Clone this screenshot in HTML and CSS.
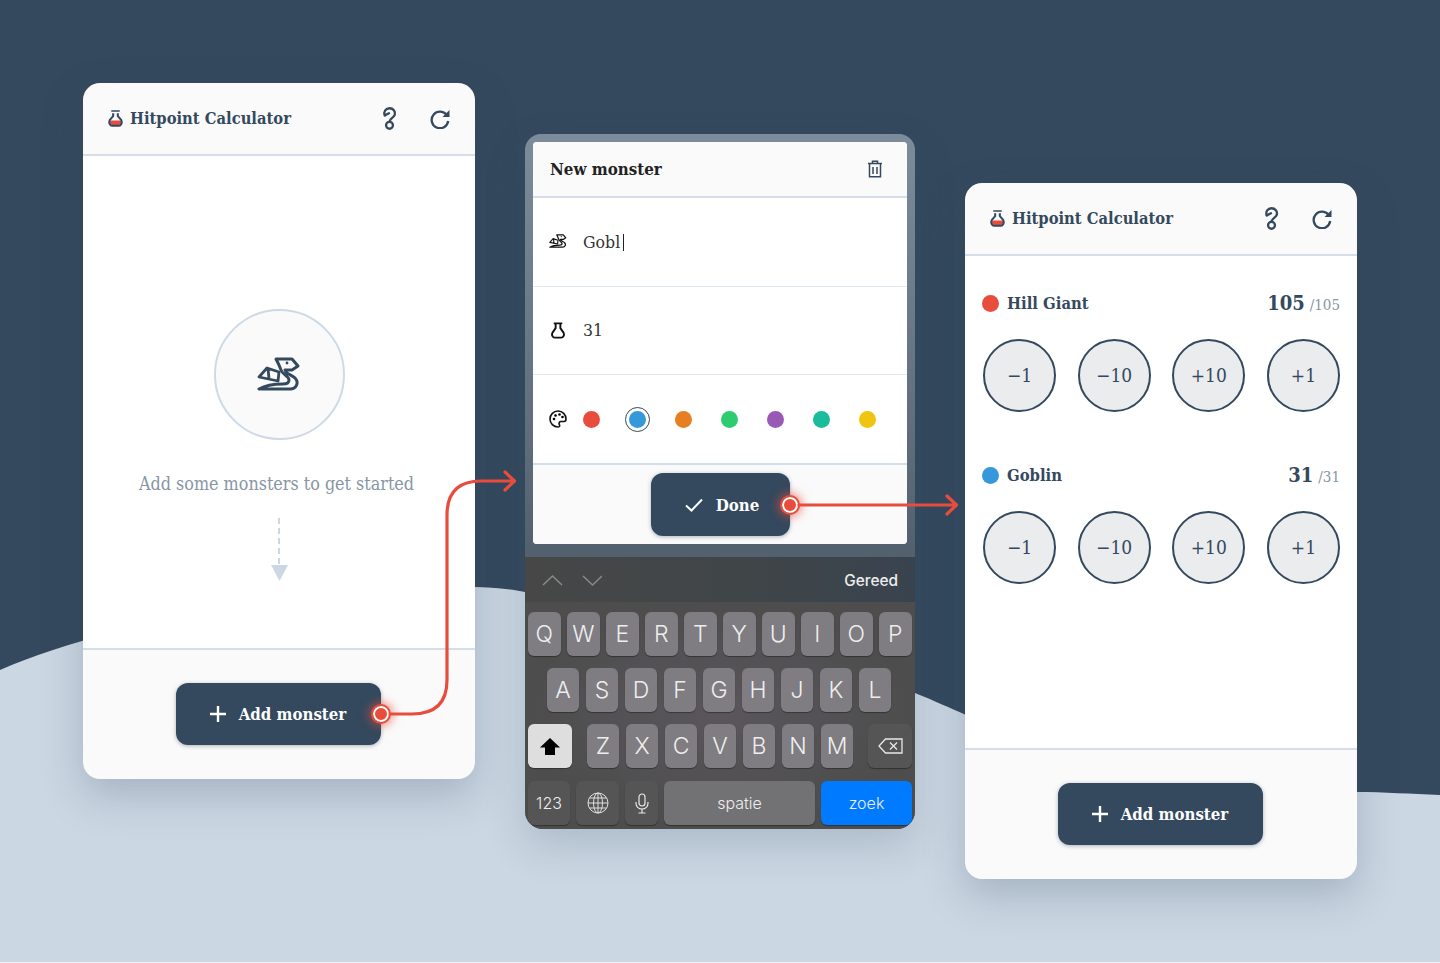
FILE: index.html
```html
<!DOCTYPE html>
<html lang="en">
<head>
  <meta charset="UTF-8" />
  <meta name="viewport" content="width=device-width, initial-scale=1.0"/>
  <title>Hitpoint Calculator</title>
  <link rel="stylesheet" href="styles.css">
</head>
<body>
  <svg width="0" height="0" class="defs">
    <symbol id="i-dragon" viewBox="0 0 44 36">
      <path d="M2 32H33C40 32 42 25 38 21C35 18 29 17 28 13L35 13L41 9L35 2H19L22 8L24 13C25 17 32 19 32 23C32 26 29 27 26 27C17 27 9 28 2 32Z" fill="none" stroke="currentColor" stroke-width="3" stroke-linejoin="round" stroke-linecap="round"/>
      <path d="M2 20L10 11L22 15L21 24ZM11 12L12 21" fill="none" stroke="currentColor" stroke-width="2.800" stroke-linejoin="round"/>
      <circle cx="30" cy="6" r="1.400" fill="currentColor"/>
    </symbol>
    <symbol id="i-flask" viewBox="0 0 16 18">
      <path d="M3.500 1.500H12.500M5.500 2V6.500L2 11.500C1 14 2.500 16.500 4.500 16.500H11.500C13.500 16.500 15 14 14 11.500L10.500 6.500V2" fill="none" stroke="currentColor" stroke-width="2" stroke-linejoin="round"/>
    </symbol>
    <symbol id="i-flask-red" viewBox="0 0 16 18">
      <path d="M3.500 1H12.500" fill="none" stroke="currentColor" stroke-width="1.800"/>
      <path d="M2.500 11H13.500L14 14L12 16H4L2 14Z" fill="#e74c3c"/>
      <path d="M5.500 3.500V6.500L2 10.500C0.500 13.500 2 16.800 4.500 16.800H11.500C14 16.800 15.500 13.500 14 10.500L10.500 6.500V3.500" fill="none" stroke="currentColor" stroke-width="2.200" stroke-linejoin="round"/>
    </symbol>
    <symbol id="i-help" viewBox="0 0 14 22">
      <path d="M2.500 8C1 4.500 3.500 1.200 7 1.200C10.500 1.200 13 4 12 7.500C11.300 10 7.500 10.500 7 14" fill="none" stroke="currentColor" stroke-width="2.200" stroke-linecap="round"/>
      <path d="M2.500 8L6.500 6" fill="none" stroke="currentColor" stroke-width="2.200" stroke-linecap="round"/>
      <circle cx="7" cy="17.500" r="3.300" fill="none" stroke="currentColor" stroke-width="2.200"/>
    </symbol>
    <symbol id="i-refresh" viewBox="0 0 20 20">
      <path d="M17 6.500A8.300 8.300 0 1 0 18.200 12" fill="none" stroke="currentColor" stroke-width="2.300"/>
      <path d="M19.500 1V8H12.500Z" fill="currentColor"/>
    </symbol>
    <symbol id="i-plus" viewBox="0 0 18 18">
      <path d="M9 1V17M1 9H17" fill="none" stroke="currentColor" stroke-width="2.400"/>
    </symbol>
  </svg>

  <div class="canvas">
    <svg class="wave" viewBox="0 0 1440 962" width="1440" height="962">
      <path d="M0 670C110 622 300 590 474 587C490 587 510 589 525 592C660 610 800 650 915 693C935 701 950 708 966 715C1080 770 1220 790 1356 792C1385 792 1410 794 1440 795V962H0Z" fill="#cbd7e3"/>
    </svg>

    <!-- Leeg scherm -->
    <section class="card card-empty">
      <header class="card-head">
        <svg class="head-flask" width="15" height="17"><use href="#i-flask-red"/></svg>
        <h1>Hitpoint Calculator</h1>
        <svg class="head-help" width="15" height="23"><use href="#i-help"/></svg>
        <svg class="head-refresh" width="20" height="20"><use href="#i-refresh"/></svg>
      </header>
      <div class="card-body empty-body">
        <div class="empty-circle">
          <svg width="44" height="36"><use href="#i-dragon"/></svg>
        </div>
        <p class="empty-text">Add some monsters to get started</p>
        <svg class="down-arrow" width="18" height="64" viewBox="0 0 18 64">
          <path d="M9 0V48" stroke="#cbd7e3" stroke-width="2" stroke-dasharray="6 4" fill="none"/>
          <path d="M1 47H18L9.500 63Z" fill="#cbd7e3"/>
        </svg>
      </div>
      <footer class="card-foot">
        <button class="btn add-btn">
          <svg width="18" height="18"><use href="#i-plus"/></svg>
          Add monster
          <span class="pin"></span>
        </button>
      </footer>
    </section>

    <!-- Nieuw monster, met toetsenbord -->
    <section class="phone">
      <div class="sheet">
        <header class="sheet-head">
          <h2>New monster</h2>
          <svg width="16" height="18" viewBox="0 0 16 18" class="trash">
            <path d="M1 3.500H15M5.500 3V1.200H10.500V3M2.500 3.500V16.800H13.500V3.500M6 7V14M10 7V14" fill="none" stroke="currentColor" stroke-width="1.500"/>
          </svg>
        </header>
        <div class="field">
          <svg class="field-icon" width="18" height="15"><use href="#i-dragon"/></svg>
          <span class="field-text">Gobl<span class="caret"></span></span>
        </div>
        <div class="field">
          <svg class="field-icon" width="16" height="17"><use href="#i-flask"/></svg>
          <span class="field-text">31</span>
        </div>
        <div class="field field-colors">
          <svg class="field-icon" width="18" height="18" viewBox="0 0 18 18">
            <path d="M9 1C4.500 1 1 4.500 1 9C1 13.500 4.500 17 9 17C11 17 11 15.500 10.300 14.500C9.500 13.200 10.300 11.500 12 11.500H15C16.500 11.500 17 10.500 17 9C17 4.500 13.500 1 9 1Z" fill="none" stroke="#111" stroke-width="1.600"/>
            <circle cx="5" cy="9" r="1.300"/><circle cx="6.500" cy="5.500" r="1.300"/><circle cx="10.500" cy="4.500" r="1.300"/><circle cx="13.500" cy="7" r="1.300"/>
          </svg>
          <div class="swatches">
            <span class="swatch red"></span>
            <span class="swatch blue selected"></span>
            <span class="swatch orange"></span>
            <span class="swatch green"></span>
            <span class="swatch purple"></span>
            <span class="swatch teal"></span>
            <span class="swatch yellow"></span>
          </div>
        </div>
        <footer class="sheet-foot">
          <button class="btn done-btn">
            <svg width="18" height="14" viewBox="0 0 18 14"><path d="M1 7.500L6.500 12.500L17 1.500" fill="none" stroke="currentColor" stroke-width="2"/></svg>
            Done
            <span class="pin"></span>
          </button>
        </footer>
      </div>

      <div class="kb-bar">
        <svg width="60" height="14" viewBox="0 0 60 14"><path d="M1 12L10.500 3L20 12M41 3L50.500 12L60 3" fill="none" stroke="#8a8a8a" stroke-width="1.500"/></svg>
        <span class="kb-done">Gereed</span>
      </div>
      <div class="keyboard">
        <div class="kb-row">
          <span class="key">Q</span><span class="key">W</span><span class="key">E</span><span class="key">R</span><span class="key">T</span><span class="key">Y</span><span class="key">U</span><span class="key">I</span><span class="key">O</span><span class="key">P</span>
        </div>
        <div class="kb-row kb-center">
          <span class="key">A</span><span class="key">S</span><span class="key">D</span><span class="key">F</span><span class="key">G</span><span class="key">H</span><span class="key">J</span><span class="key">K</span><span class="key">L</span>
        </div>
        <div class="kb-row kb-between">
          <span class="key key-wide key-shift">
            <svg width="20" height="17" viewBox="0 0 20 17"><path d="M10 0L20 9.500H15V17H5V9.500H0Z" fill="#000"/></svg>
          </span>
          <div class="kb-group">
            <span class="key">Z</span><span class="key">X</span><span class="key">C</span><span class="key">V</span><span class="key">B</span><span class="key">N</span><span class="key">M</span>
          </div>
          <span class="key key-wide key-dark">
            <svg width="25" height="16" viewBox="0 0 25 16"><path d="M7.500 1H24V15H7.500L1 8Z" fill="none" stroke="#e8e8e8" stroke-width="1.300"/><path d="M12 4.500L19 11.500M19 4.500L12 11.500" stroke="#e8e8e8" stroke-width="1.300"/></svg>
          </span>
        </div>
        <div class="kb-row kb-last">
          <span class="key key-num key-dark">123</span>
          <span class="key key-globe key-dark">
            <svg width="22" height="22" viewBox="0 0 22 22" fill="none" stroke="#e0e0e0" stroke-width="1"><circle cx="11" cy="11" r="10"/><ellipse cx="11" cy="11" rx="4.500" ry="10"/><path d="M11 1V21M1 11H21M2.500 6H19.500M2.500 16H19.500"/></svg>
          </span>
          <span class="key key-mic key-dark">
            <svg width="14" height="21" viewBox="0 0 14 21" fill="none" stroke="#e8e8e8" stroke-width="1.200"><rect x="4" y="1" width="6" height="12" rx="3"/><path d="M1 9V10C1 13.500 3.500 16 7 16C10.500 16 13 13.500 13 10V9M7 16V20M3.500 20H10.500"/></svg>
          </span>
          <span class="key key-space">spatie</span>
          <span class="key key-go">zoek</span>
        </div>
      </div>
    </section>

    <!-- Berekenaar met monsters -->
    <section class="card card-list">
      <header class="card-head">
        <svg class="head-flask" width="15" height="17"><use href="#i-flask-red"/></svg>
        <h1>Hitpoint Calculator</h1>
        <svg class="head-help" width="15" height="23"><use href="#i-help"/></svg>
        <svg class="head-refresh" width="20" height="20"><use href="#i-refresh"/></svg>
      </header>
      <div class="card-body list-body">
        <div class="monster">
          <div class="monster-top">
            <span class="swatch red"></span>
            <strong class="monster-name">Hill Giant</strong>
            <strong class="hp">105</strong>
            <span class="hp-max">/105</span>
          </div>
          <div class="hp-buttons">
            <button class="round">−1</button>
            <button class="round">−10</button>
            <button class="round">+10</button>
            <button class="round">+1</button>
          </div>
        </div>
        <div class="monster">
          <div class="monster-top">
            <span class="swatch blue"></span>
            <strong class="monster-name">Goblin</strong>
            <strong class="hp">31</strong>
            <span class="hp-max">/31</span>
          </div>
          <div class="hp-buttons">
            <button class="round">−1</button>
            <button class="round">−10</button>
            <button class="round">+10</button>
            <button class="round">+1</button>
          </div>
        </div>
      </div>
      <footer class="card-foot">
        <button class="btn add-btn">
          <svg width="18" height="18"><use href="#i-plus"/></svg>
          Add monster
        </button>
      </footer>
    </section>

    <!-- Verbindingslijnen -->
    <svg class="links" viewBox="0 0 1440 962" width="1440" height="962">
      <path d="M390 714H412Q447 714 447 680V515Q447 481 481 481H514M505 472L514.500 481L505 490" fill="none" stroke="#e74c3c" stroke-width="3.200" stroke-linecap="round" stroke-linejoin="round"/>
      <path d="M799 505H956M947 496L956.500 505L947 514" fill="none" stroke="#e74c3c" stroke-width="3.200" stroke-linecap="round" stroke-linejoin="round"/>
    </svg>
  </div>
</body>
</html>
```

FILE: styles.css
```css
html {
  background: #eef1f4;
}
body {
  margin: 0;
  font-family: "DejaVu Serif", "Liberation Serif", serif;
  font-stretch: condensed;
  color: #34495e;
}
button {
  font-family: inherit;
  font-stretch: inherit;
}
.defs {
  position: absolute;
}
.canvas {
  position: relative;
  width: 1440px;
  height: 962px;
  background: #34495e;
  overflow: hidden;
}
.wave, .links {
  position: absolute;
  left: 0;
  top: 0;
}
.links {
  pointer-events: none;
}

/* Kaarten */
.card {
  position: absolute;
  width: 392px;
  height: 696px;
  display: flex;
  flex-direction: column;
  background: #fafafa;
  border-radius: 17px;
  overflow: hidden;
  box-shadow: 0 16px 40px rgba(52,73,94,0.25);
}
.card-empty {
  left: 83px;
  top: 83px;
}
.card-list {
  left: 965px;
  top: 183px;
}
.card-head {
  height: 71px;
  flex: none;
  display: flex;
  align-items: center;
  padding: 0 25px;
  border-bottom: 2px solid #d3dee9;
}
.card-head h1 {
  margin: 0 0 0 7px;
  flex: 1;
  font-size: 16.4px;
  font-weight: bold;
}
.head-refresh {
  margin-left: 33px;
}
.card-body {
  flex: 1;
  background: #fff;
}
.card-foot {
  height: 131px;
  flex: none;
  display: flex;
  align-items: flex-start;
  justify-content: center;
  padding-top: 33px;
  box-sizing: border-box;
  border-top: 2px solid #d3dee9;
}

/* Knoppen */
.btn {
  position: relative;
  display: flex;
  align-items: center;
  justify-content: center;
  border: none;
  border-radius: 12px;
  background: #34495e;
  color: #fff;
  font-size: 16.7px;
  font-weight: bold;
  box-shadow: 0 1px 4px rgba(52,73,94,0.4);
}
.add-btn {
  width: 205px;
  height: 62px;
  margin-right: 1px;
  padding: 0 8px 0 6px;
  gap: 12px;
}
.done-btn {
  width: 139px;
  height: 63px;
  margin-left: 1px;
  padding-left: 9px;
  gap: 13px;
}
.pin {
  position: absolute;
  right: -8px;
  top: 50%;
  width: 12px;
  height: 12px;
  margin-top: -8px;
  border-radius: 50%;
  background: #e74c3c;
  border: 2px solid #fff;
  outline: 2px solid #e74c3c;
  box-shadow: 0 0 10px 4px rgba(231,76,60,0.6);
}

/* Leeg scherm */
.empty-body {
  display: flex;
  flex-direction: column;
  align-items: center;
  padding-top: 153px;
}
.empty-circle {
  width: 127px;
  height: 127px;
  display: flex;
  align-items: center;
  justify-content: center;
  background: #fafafa;
  border: 2px solid #cddae6;
  border-radius: 50%;
}
.empty-text {
  margin: 33px 5px 24px 0;
  font-size: 17.8px;
  color: #8795a5;
}

/* Telefoon */
.phone {
  position: absolute;
  left: 525px;
  top: 134px;
  width: 390px;
  height: 695px;
  border-radius: 16px 16px 18px 18px;
  overflow: hidden;
  background: linear-gradient(#7d8c9b, #53616f 60%);
  box-shadow: 0 16px 40px rgba(52,73,94,0.2);
}
.sheet {
  margin: 8px 8px 13px;
  height: 402px;
  display: flex;
  flex-direction: column;
  background: #fff;
  border-radius: 4px;
  overflow: hidden;
}
.sheet-head {
  height: 54px;
  flex: none;
  display: flex;
  align-items: center;
  justify-content: space-between;
  padding: 0 24px 0 16px;
  background: #fafafa;
  border-bottom: 2px solid #d3dee9;
}
.sheet-head h2 {
  margin: 0 0 1px 1px;
  font-size: 16.8px;
  color: #222;
}
.trash {
  color: #34495e;
}
.field {
  height: 88.5px;
  flex: none;
  display: flex;
  align-items: center;
  padding-left: 16px;
  box-sizing: border-box;
  border-bottom: 1px solid #dfe7ef;
}
.field-colors {
  height: 90px;
  border-bottom: 2px solid #d3dee9;
}
.field-icon {
  width: 18px;
  color: #111;
  margin-right: 16px;
  flex: none;
}
.field-text {
  font-size: 17.5px;
  color: #333;
}
.caret {
  display: inline-block;
  width: 1px;
  height: 17px;
  margin-left: 3px;
  background: #222;
  vertical-align: -3px;
}
.swatches {
  display: flex;
  gap: 29px;
  align-items: center;
}
.swatch {
  position: relative;
  width: 17px;
  height: 17px;
  flex: none;
  border-radius: 50%;
}
.swatch.selected {
  outline: 1px solid #34495e;
  outline-offset: 3px;
}
.red { background: #e74c3c; }
.blue { background: #3498db; }
.orange { background: #e67e22; }
.green { background: #2ecc71; }
.purple { background: #9b59b6; }
.teal { background: #1abc9c; }
.yellow { background: #f1c40f; }
.sheet-foot {
  flex: 1;
  display: flex;
  justify-content: center;
  padding-top: 8px;
  background: #fafafa;
}

/* Toetsenbord */
.kb-bar {
  height: 45px;
  display: flex;
  align-items: center;
  justify-content: space-between;
  padding: 0 17px;
  background: linear-gradient(90deg, #474747, #3f4548 60%, #39434f);
}
.kb-done {
  font-family: "Inter", sans-serif;
  font-stretch: normal;
  font-size: 15.4px;
  font-weight: 500;
  color: #eee;
  padding-top: 2px;
}
.keyboard {
  height: 227px;
  box-sizing: border-box;
  padding: 10px 3px 3px;
  display: flex;
  flex-direction: column;
  gap: 12px;
  background: radial-gradient(ellipse at 50% 50%, #5a565c, #4d4d4d 70%);
}
.kb-row {
  display: flex;
  gap: 6.5px;
  height: 44px;
}
.kb-center {
  justify-content: center;
  padding-right: 2px;
}
.kb-between {
  justify-content: space-between;
}
.kb-group {
  display: flex;
  gap: 6.5px;
}
.kb-last {
  gap: 6px;
  margin-top: 1px;
}
.key {
  width: 32.5px;
  flex: none;
  display: flex;
  align-items: center;
  justify-content: center;
  border-radius: 6px;
  background: #7f7d81;
  color: #eee;
  font-family: "Inter", sans-serif;
  font-stretch: normal;
  font-size: 23px;
  font-weight: 300;
  box-shadow: 0 1px 1px rgba(0,0,0,0.35);
}
.key-wide {
  width: 44px;
}
.key-shift {
  background: #dedede;
}
.key-dark {
  background: #555;
}
.key-num {
  width: 42px;
  font-size: 16px;
}
.key-globe {
  width: 43px;
}
.key-mic {
  width: 33px;
}
.key-space {
  width: 151px;
  background: #727173;
  font-size: 16px;
}
.key-go {
  width: 91px;
  background: #007aff;
  font-size: 16px;
}

/* Monsters */
.list-body {
  padding: 0 17px 0 18px;
}
.monster {
  height: 172px;
  padding-top: 37px;
  box-sizing: border-box;
}
.monster-top {
  display: flex;
  align-items: center;
  height: 20px;
  margin-bottom: 26px;
  margin-left: -1px;
}
.monster-name {
  margin-left: 8px;
  flex: 1;
  font-size: 16.5px;
}
.hp {
  font-size: 20px;
}
.hp-max {
  margin: 4px 0 0 5px;
  font-size: 15px;
  color: #8795a5;
}
.hp-buttons {
  display: flex;
  justify-content: space-between;
}
.round {
  width: 73px;
  height: 73px;
  padding: 0 0 2px;
  border: 2px solid #34495e;
  border-radius: 50%;
  background: #eaecee;
  color: #34495e;
  font-size: 19px;
}
```
